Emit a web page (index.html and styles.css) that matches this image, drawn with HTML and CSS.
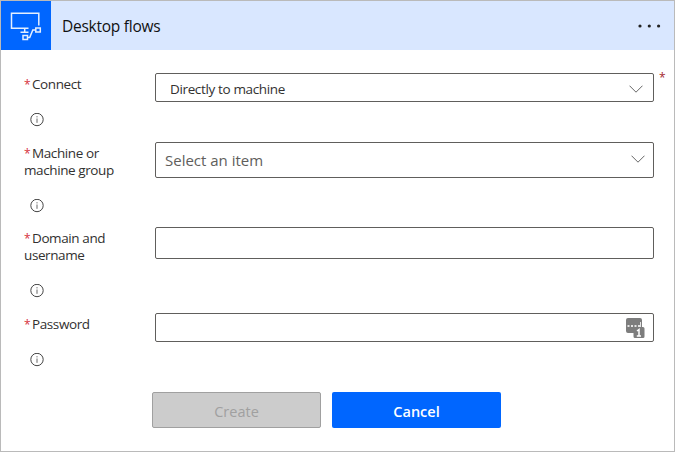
FILE: index.html
```html
<!DOCTYPE html>
<html lang="en">
<head>
<meta charset="utf-8">
<title>Desktop flows</title>
<link rel="stylesheet" href="styles.css">
</head>
<body>
<svg class="defs" width="0" height="0">
  <symbol id="info" viewBox="0 0 14 14"><circle cx="7" cy="6.500" r="6.200" fill="none" stroke="#444" stroke-width="1"/><path d="M7 5.500v4.300M7 3.200v1.200" fill="none" stroke="#666" stroke-width="1"/></symbol>
  <symbol id="chevron" viewBox="0 0 14 8"><path d="M.5.7 7 7.200 13.500.7" fill="none" stroke="#666" stroke-width="1"/></symbol>
</svg>
<main class="card">
  <header class="header">
    <div class="logo">
      <svg width="50" height="49" viewBox="0 0 50 49" fill="none" stroke="#e4efff" stroke-width="1.500">
        <path d="M27.500 27.200H10.500V12.200H37.800V24.500M23.700 27.500V31M19.500 31.200H27.500"/>
        <rect x="34.800" y="27" width="4.500" height="4"/>
        <rect x="22" y="34.500" width="4.500" height="4"/>
        <path d="M26.500 36.500H28.700L31.800 29H34.800"/>
      </svg>
    </div>
    <h1 class="title">Desktop flows</h1>
    <svg class="more" width="24" height="6" viewBox="0 0 24 6" fill="#222"><circle cx="3" cy="3" r="1.600"/><circle cx="12.300" cy="3" r="1.600"/><circle cx="21.600" cy="3" r="1.600"/></svg>
  </header>
  <form class="form">
    <div class="row row-connect">
      <div class="side"><div class="label"><span class="star">*</span>Connect</div><svg class="info"><use href="#info"/></svg></div>
      <div class="field select"><span class="value">Directly to machine</span><svg class="chevron"><use href="#chevron"/></svg></div>
      <span class="required">*</span>
    </div>
    <div class="row row-machine">
      <div class="side"><div class="label"><span class="star">*</span>Machine or<br>machine group</div><svg class="info"><use href="#info"/></svg></div>
      <div class="field combo"><span class="placeholder">Select an item</span><svg class="chevron"><use href="#chevron"/></svg></div>
    </div>
    <div class="row row-user">
      <div class="side"><div class="label"><span class="star">*</span>Domain and<br>username</div><svg class="info"><use href="#info"/></svg></div>
      <div class="field"></div>
    </div>
    <div class="row row-password">
      <div class="side"><div class="label"><span class="star">*</span>Password</div><svg class="info"><use href="#info"/></svg></div>
      <div class="field"><svg class="manager" width="19" height="21" viewBox="0 0 19 21"><path d="M2 0H14Q16 0 16 2V9H17Q18.500 9 18.500 10.500V18.500Q18.500 20 17 20H9Q7.500 20 7.500 18.500V15H2Q0 15 0 13V2Q0 0 2 0Z" fill="#7d7d7d"/><path d="M1.500 7h2v2h-2zM5 7h2v2H5zM8.500 7h2v2h-2zM12 7h2v2h-2zM14 4h1v5h-1z" fill="#e4e4e4"/><path d="M11 13 13 11.500V18M10.800 18H15" fill="none" stroke="#fff" stroke-width="1.500"/></svg></div>
    </div>
    <div class="actions">
      <button class="btn create" type="button" disabled>Create</button>
      <button class="btn cancel" type="button">Cancel</button>
    </div>
  </form>
</main>
</body>
</html>
```
FILE: styles.css
```css
* { box-sizing: border-box; }
body { margin: 0; font-family: "Open Sans", "Noto Sans", sans-serif; color: #323130; background: #fff; }
svg { display: block; }
.defs { position: absolute; }
.card { width: 675px; height: 452px; border: 1px solid #bababa; background: #fff; }
.header { display: flex; align-items: center; height: 49px; background: #d9e7ff; }
.logo { width: 50px; height: 49px; background: #0066ff; }
.title { margin: 0 0 0 11px; font-size: 15.5px; line-height: 22px; font-weight: 400; letter-spacing: -.25px; color: #111; white-space: nowrap; }
.more { margin: 0 13px 0 auto; }
.form { padding: 23px 0 0 23px; }
.row { display: flex; align-items: flex-start; }
.row-connect { height: 69px; }
.row-machine { height: 85px; }
.row-user { height: 86px; }
.row-password { height: 79px; }
.side { display: flex; flex-direction: column; justify-content: space-between; width: 131px; height: 54px; padding-top: 3px; }
.row-machine .side, .row-user .side { height: 71px; }
.label { font-size: 13.5px; line-height: 17px; letter-spacing: -.4px; white-space: nowrap; }
.star { display: inline-block; width: 8px; font-size: 12px; color: #d6303b; }
.info { width: 14px; height: 14px; margin-left: 6px; }
.field { display: flex; align-items: center; justify-content: space-between; width: 499px; height: 29px; border: 1px solid #605e5c; border-radius: 2px; background: #fff; }
.row-user .field { height: 32px; }
.field.combo { height: 36px; }
.chevron { width: 14px; height: 8px; }
.select { padding: 2px 10px 0 14px; }
.combo { padding: 0 8px 0 9px; }
.combo .chevron { margin-bottom: 2px; }
.value { font-size: 13.5px; line-height: 18px; letter-spacing: -.36px; }
.placeholder { font-size: 15px; line-height: 22px; color: #605e5c; }
.manager { margin: 1px 8px 0 auto; }
.required { margin: -4px 0 0 5px; font-size: 12px; line-height: 17px; color: #a4262c; }
.actions { display: flex; gap: 11px; padding-left: 128px; }
.btn { width: 169px; height: 36px; padding: 3px 0 0; border: 0; border-radius: 2px; font: 600 14.5px/20px "Open Sans", sans-serif; }
.create { border: 1px solid #a0a0a0; background: #ccc; color: #a0a0a0; font-weight: 500; }
.cancel { background: #0066ff; color: #fff; }
```
